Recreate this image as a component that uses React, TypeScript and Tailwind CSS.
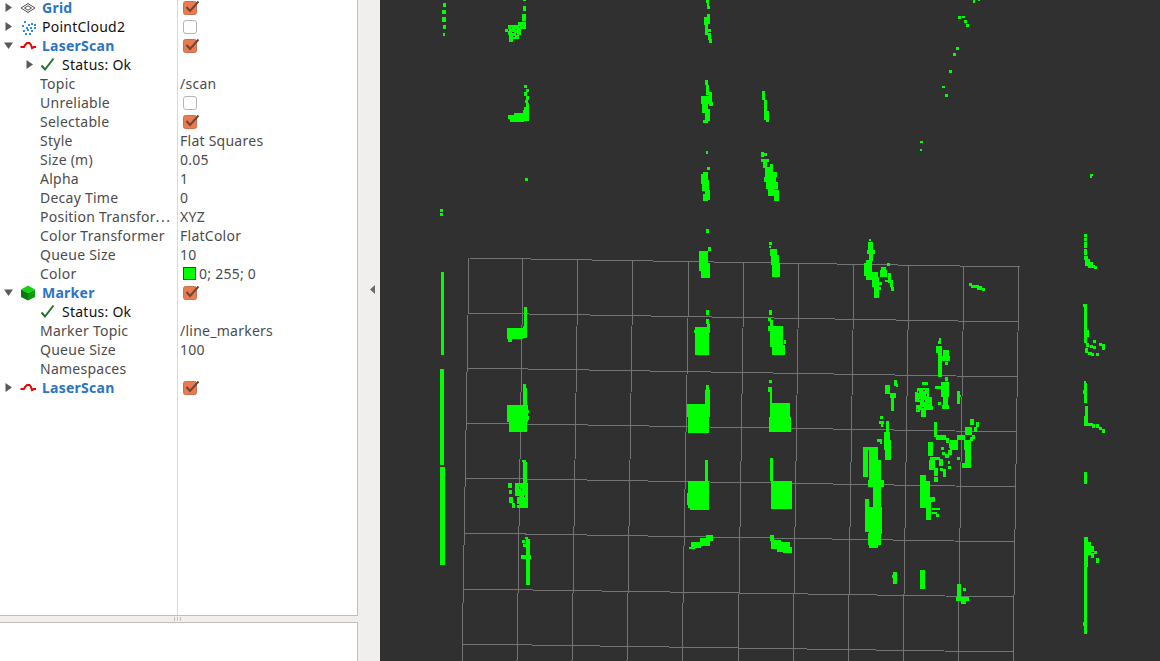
import React from "react";

const lines: number[][] = [
	[469, 258, 1020, 267],
	[467, 313, 1018, 322],
	[466, 368, 1017, 377],
	[465, 423, 1016, 432],
	[464, 478, 1016, 487],
	[464, 533, 1015, 542],
	[463, 589, 1014, 597],
	[462, 644, 1013, 652],
	[469, 258, 462, 661],
	[523, 259, 517, 661],
	[578, 260, 572, 661],
	[633, 260, 627, 661],
	[689, 261, 682, 661],
	[744, 262, 738, 661],
	[799, 263, 793, 661],
	[854, 264, 848, 661],
	[909, 265, 903, 661],
	[964, 266, 958, 661],
	[1019, 267, 1013, 661],
];

const pts: number[][] = [
	[441, 272, 3, 69], [441, 341, 3, 14], [440, 369, 4, 96], [440, 467, 5, 98],
	[443, 3, 3, 4], [442, 10, 4, 4], [442, 17, 4, 5], [443, 25, 3, 4], [443, 33, 2, 3], [440, 209, 3, 3], [440, 213, 3, 3],
	[523, 0, 3, 1], [523, 6, 3, 5], [522, 14, 4, 7], [518, 22, 8, 7], [508, 25, 13, 10], [505, 29, 4, 3], [509, 35, 10, 4], [509, 39, 4, 3],
	[524, 85, 3, 3], [526, 89, 3, 3], [524, 92, 3, 4], [526, 96, 3, 4], [525, 100, 3, 3], [526, 103, 3, 4], [524, 107, 5, 3], [523, 110, 6, 11], [514, 113, 10, 9], [508, 115, 8, 4], [510, 119, 10, 3],
	[706, 0, 3, 3], [707, 3, 2, 6], [707, 6, 3, 3], [707, 14, 3, 10], [704, 17, 4, 8], [705, 25, 3, 10], [708, 29, 3, 3], [708, 33, 3, 7], [709, 39, 3, 4],
	[705, 80, 3, 5], [706, 85, 3, 10], [709, 92, 3, 14], [701, 96, 8, 8], [702, 104, 6, 9], [705, 109, 5, 12], [703, 120, 5, 3], [710, 102, 3, 4],
	[762, 91, 3, 9], [764, 100, 3, 20], [766, 111, 3, 11],
	[706, 151, 2, 3], [707, 167, 3, 3], [703, 172, 5, 10], [701, 174, 4, 10], [702, 180, 7, 11], [705, 190, 5, 10], [703, 194, 5, 7], [706, 229, 3, 4],
	[761, 152, 3, 5], [764, 153, 3, 3], [761, 159, 8, 3], [763, 162, 4, 6], [770, 164, 3, 8], [765, 167, 7, 10], [772, 172, 5, 5], [764, 177, 12, 5], [766, 182, 12, 7], [768, 189, 6, 7], [774, 190, 5, 11],
	[525, 178, 3, 3],
	[706, 230, 3, 3], [708, 247, 3, 4], [699, 251, 9, 20], [701, 263, 9, 15],
	[769, 242, 3, 3], [769, 246, 2, 2], [770, 249, 7, 7], [771, 255, 8, 10], [772, 263, 8, 14],
	[524, 307, 3, 20], [523, 326, 4, 12], [507, 328, 16, 11], [508, 339, 4, 3],
	[706, 310, 3, 5], [706, 319, 3, 5], [695, 327, 14, 28], [694, 330, 16, 3], [707, 324, 3, 7],
	[769, 310, 3, 5], [768, 318, 3, 3], [770, 320, 3, 7], [768, 326, 15, 5], [770, 330, 13, 17], [772, 345, 13, 10], [784, 340, 2, 4],
	[523, 384, 3, 21], [525, 388, 2, 17], [507, 405, 21, 17], [509, 420, 18, 12], [528, 410, 1, 3], [528, 416, 1, 4],
	[706, 385, 3, 20], [705, 390, 5, 23], [687, 404, 23, 13], [688, 417, 21, 16],
	[769, 380, 3, 3], [768, 387, 4, 5], [770, 392, 2, 13], [770, 403, 20, 17], [769, 417, 22, 15],
	[522, 460, 4, 2], [523, 462, 4, 23], [520, 483, 8, 25], [515, 483, 5, 13], [508, 483, 4, 5], [509, 490, 3, 4], [509, 497, 4, 6], [512, 503, 3, 5], [517, 497, 3, 7], [517, 505, 7, 3],
	[525, 537, 3, 2], [526, 539, 4, 46], [523, 544, 3, 3], [522, 540, 3, 3], [521, 555, 10, 4],
	[705, 460, 3, 22], [688, 481, 21, 27], [687, 493, 2, 12], [690, 507, 19, 3],
	[770, 458, 3, 23], [771, 481, 21, 28],
	[706, 535, 7, 6], [700, 538, 10, 8], [691, 542, 10, 6], [689, 547, 6, 2],
	[770, 535, 4, 6], [771, 540, 10, 9], [777, 542, 13, 10], [783, 547, 9, 6],
	[869, 239, 2, 2], [868, 242, 5, 10], [867, 250, 8, 4], [869, 254, 4, 7], [866, 260, 6, 20], [864, 263, 8, 13], [868, 272, 10, 7], [872, 277, 7, 10], [874, 287, 7, 3], [874, 288, 5, 10], [880, 270, 7, 7], [881, 267, 5, 3], [887, 263, 3, 3], [885, 280, 3, 2], [879, 282, 3, 3], [888, 273, 3, 10], [890, 280, 3, 7], [891, 287, 3, 4],
	[969, 283, 3, 3], [971, 285, 8, 3], [977, 286, 5, 4], [982, 288, 3, 3],
	[1084, 234, 3, 3], [1084, 238, 3, 3], [1084, 242, 3, 6], [1084, 249, 3, 6], [1084, 256, 4, 4], [1085, 259, 5, 7], [1088, 262, 5, 6], [1092, 265, 3, 3], [1094, 266, 3, 3],
	[1083, 304, 4, 3], [1084, 307, 3, 3], [1084, 310, 3, 33], [1086, 330, 3, 7], [1086, 343, 3, 4], [1085, 348, 3, 5], [1088, 352, 4, 3], [1091, 353, 3, 3], [1096, 353, 3, 3], [1090, 345, 3, 3], [1093, 340, 3, 3], [1093, 346, 3, 3], [1099, 343, 3, 3], [1102, 344, 3, 6],
	[1084, 381, 2, 3], [1084, 383, 3, 20], [1083, 390, 4, 4], [1085, 406, 3, 17], [1084, 416, 4, 10], [1088, 423, 5, 3], [1092, 424, 3, 4], [1096, 424, 3, 4], [1099, 427, 3, 3], [1102, 429, 3, 4],
	[939, 338, 2, 3], [938, 341, 3, 3], [936, 346, 6, 7], [938, 353, 4, 24], [943, 350, 6, 10], [942, 356, 8, 5], [945, 362, 3, 3],
	[894, 380, 3, 6], [896, 384, 2, 3], [885, 385, 5, 9], [890, 393, 6, 5], [891, 397, 3, 14],
	[922, 382, 6, 3], [917, 388, 12, 13], [915, 392, 5, 10], [920, 397, 12, 13], [916, 405, 4, 7], [921, 410, 5, 7], [929, 406, 4, 4],
	[945, 377, 3, 4], [941, 382, 8, 15], [935, 386, 7, 3], [943, 395, 5, 10], [942, 405, 7, 4], [938, 402, 3, 3], [957, 391, 3, 13], [959, 395, 2, 2],
	[934, 422, 3, 15], [936, 435, 10, 5], [946, 438, 3, 5],
	[970, 419, 4, 6], [965, 427, 7, 8], [957, 435, 8, 5], [950, 440, 8, 10], [976, 422, 3, 5], [974, 427, 3, 5], [972, 435, 3, 4], [970, 437, 3, 4], [964, 440, 7, 10],
	[880, 416, 3, 3], [879, 421, 5, 3], [881, 424, 2, 3], [886, 421, 3, 29], [884, 432, 6, 18], [877, 439, 5, 3], [880, 441, 2, 3], [863, 447, 13, 3], [928, 442, 5, 8], [941, 447, 3, 3],
	[885, 440, 6, 20],
	[863, 457, 5, 20], [863, 447, 5, 12], [872, 447, 6, 14], [869, 447, 3, 13], [869, 460, 12, 22], [868, 480, 16, 7], [873, 487, 8, 23], [865, 499, 4, 33], [869, 507, 13, 27], [868, 533, 13, 12], [869, 545, 9, 3],
	[920, 475, 6, 33], [926, 481, 4, 20], [930, 497, 5, 5], [926, 500, 5, 20], [932, 508, 8, 2], [932, 512, 5, 2], [936, 514, 3, 3],
	[928, 443, 5, 13], [930, 457, 10, 3], [929, 460, 6, 10], [934, 468, 4, 8], [934, 477, 4, 5], [942, 452, 3, 3], [945, 454, 4, 4], [939, 459, 4, 7], [948, 461, 2, 3], [948, 466, 3, 3], [940, 468, 3, 3], [943, 469, 3, 8], [949, 443, 5, 5], [948, 450, 4, 5], [965, 440, 6, 28], [957, 457, 3, 3], [962, 463, 7, 5],
	[1084, 472, 3, 12],
	[892, 575, 2, 3], [893, 572, 4, 12], [920, 570, 5, 19],
	[957, 584, 4, 16], [956, 597, 13, 4], [961, 600, 5, 4], [963, 588, 3, 3],
	[1084, 537, 4, 30], [1084, 567, 3, 13], [1084, 577, 3, 54], [1083, 622, 4, 4], [1084, 630, 3, 4], [1088, 542, 3, 13], [1091, 546, 3, 6], [1094, 551, 3, 3], [1091, 553, 3, 5], [1096, 558, 3, 5],
	[973, 0, 2, 3], [978, 0, 2, 1], [958, 16, 3, 3], [962, 16, 3, 2], [964, 20, 3, 3], [966, 24, 3, 3], [956, 47, 3, 3], [953, 53, 3, 3], [949, 70, 3, 3], [942, 86, 3, 2], [945, 94, 3, 3], [920, 141, 3, 2], [920, 149, 2, 2], [1090, 174, 3, 2], [1090, 175, 2, 3],
];

// gaps in the dotted blobs, painted over the green
const holes: number[][] = [
	[511, 27, 1, 2], [515, 29, 2, 1], [519, 26, 1, 2], [512, 32, 2, 1], [516, 33, 1, 2], [508, 29, 1, 2], [522, 25, 1, 1], [513, 36, 2, 1],
	[918, 391, 1, 2], [923, 390, 2, 1], [926, 394, 1, 2], [919, 399, 2, 1], [924, 400, 1, 2], [928, 403, 1, 1], [922, 407, 2, 1], [917, 409, 1, 1],
	[521, 488, 1, 3], [524, 495, 1, 2], [519, 486, 1, 3],
];

const Arrow = ({ open }: { open?: boolean }) => (
	<svg width="9" height="9" viewBox="0 0 9 9" className="shrink-0">
		{open ? <path d="M0 1.500h9L4.500 8z" fill="#5a5a55" /> : <path d="M1.500 0v9L8 4.500z" fill="#5a5a55" />}
	</svg>
);

const GridIcon = () => (
	<svg width="16" height="16" viewBox="0 0 16 16" className="shrink-0">
		<path d="M1 8l7-4.500L15 8l-7 4.500zM4.500 8L8 5.800 11.500 8 8 10.200z" fill="none" stroke="#4a4a4a" strokeWidth="1" />
	</svg>
);

const CloudIcon = () => (
	<svg width="16" height="16" viewBox="0 0 16 16" className="shrink-0">
		{[[4, 2], [8, 5], [11, 4], [14, 5], [2, 6], [6, 8], [10, 8], [14, 8], [3, 11], [7, 10], [11, 11], [5, 14], [9, 14]].map(([x, y]) => (
			<rect key={`${x}-${y}`} x={x} y={y} width="2" height="2" fill="#2a8fe8" />
		))}
	</svg>
);

const ScanIcon = () => (
	<svg width="16" height="16" viewBox="0 0 16 16" className="shrink-0">
		<path d="M0.500 9h3.500l1-2 2-2h2.500l1.500 2 1 3 2-1h2" fill="none" stroke="#f00000" strokeWidth="2" />
	</svg>
);

const CubeIcon = () => (
	<svg width="16" height="16" viewBox="0 0 16 16" className="shrink-0">
		<path d="M8 8l7-3.500v7.500L8 15.500z" fill="#0a9a0a" />
		<path d="M8 .500l7 4L8 8 1 4.500z" fill="#10d410" />
		<path d="M8 8v7.500L1 12V4.500z" fill="#0a7a0a" />
	</svg>
);

const Check = () => (
	<svg width="15" height="15" viewBox="0 0 15 15" className="shrink-0">
		<path d="M1.500 8.500l3.500 4L13.500 1.500" fill="none" stroke="#25702a" strokeWidth="2" />
	</svg>
);

const Box = ({ on }: { on?: boolean }) =>
	on ? (
		<svg width="17" height="14" viewBox="0 0 17 14" className="ml-[3px] shrink-0 overflow-visible">
			<rect x=".5" y=".5" width="13" height="13" rx="2" fill="#ec7a4e" stroke="#c9714c" />
			<path d="M3.500 6l3.500 4L15.500 .5" fill="none" stroke="#66483a" strokeWidth="2" />
		</svg>
	) : (
		<span className="ml-[3px] block h-[14px] w-[14px] rounded-[3px] border border-[#b8b5b0] bg-white" />
	);

type Row = {
	indent: number;
	arrow?: "open" | "closed";
	icon?: React.ReactNode;
	label: React.ReactNode;
	head?: boolean;
	dark?: boolean;
	value?: React.ReactNode;
};

const rows: Row[] = [
	{ indent: 0, arrow: "closed", icon: <GridIcon />, label: "Grid", head: true, value: <Box on /> },
	{ indent: 0, arrow: "closed", icon: <CloudIcon />, label: "PointCloud2", dark: true, value: <Box /> },
	{ indent: 0, arrow: "open", icon: <ScanIcon />, label: "LaserScan", head: true, value: <Box on /> },
	{ indent: 1, arrow: "closed", icon: <Check />, label: "Status: Ok", dark: true },
	{ indent: 2, label: "Topic", value: "/scan" },
	{ indent: 2, label: "Unreliable", value: <Box /> },
	{ indent: 2, label: "Selectable", value: <Box on /> },
	{ indent: 2, label: "Style", value: "Flat Squares" },
	{ indent: 2, label: "Size (m)", value: "0.05" },
	{ indent: 2, label: "Alpha", value: "1" },
	{ indent: 2, label: "Decay Time", value: "0" },
	{ indent: 2, label: <>Position Transfor<span className="tracking-[1.5px]">...</span></>, value: "XYZ" },
	{ indent: 2, label: "Color Transformer", value: "FlatColor" },
	{ indent: 2, label: "Queue Size", value: "10" },
	{
		indent: 2,
		label: "Color",
		value: (
			<span className="flex items-center gap-[3px]">
				<span className="ml-[3px] block h-[13px] w-[13px] border border-[#404040] bg-[#00ff00]" />
				0; 255; 0
			</span>
		),
	},
	{ indent: 0, arrow: "open", icon: <CubeIcon />, label: "Marker", head: true, value: <Box on /> },
	{ indent: 1, icon: <Check />, label: "Status: Ok", dark: true },
	{ indent: 2, label: "Marker Topic", value: "/line_markers" },
	{ indent: 2, label: "Queue Size", value: "100" },
	{ indent: 2, label: "Namespaces" },
	{ indent: 0, arrow: "closed", icon: <ScanIcon />, label: "LaserScan", head: true, value: <Box on /> },
];

function TreeRow({ row }: { row: Row }) {
	const color = row.head ? "text-[#2b74c7] font-bold" : row.dark ? "text-[#111111]" : "text-[#4c4c4c]";
	return (
		<div className="flex h-[19px] items-center">
			<div className="flex w-[177px] shrink-0 items-center">
				{row.indent === 2 ? (
					<span className="w-[40px] shrink-0" />
				) : (
					<span className={`flex shrink-0 items-center ${row.indent === 1 ? "w-[40px] pl-[25px]" : "w-[20px] pl-[4px]"}`}>
						{row.arrow && <Arrow open={row.arrow === "open"} />}
					</span>
				)}
				{row.icon && <span className="w-[22px] shrink-0">{row.icon}</span>}
				<span className={`whitespace-nowrap ${color}`}>{row.label}</span>
			</div>
			<div className="ml-px flex flex-1 items-center whitespace-nowrap pl-[2px] text-[#4c4c4c]">{row.value}</div>
		</div>
	);
}

export default function App() {
	return (
		<div className="flex h-[661px] w-[1160px] overflow-hidden bg-[#f0efed] font-['Noto_Sans',sans-serif] text-[14px] leading-[15px] tracking-[0.25px]">
			<div className="flex w-[358px] shrink-0 flex-col">
				<div className="relative h-[616px] overflow-hidden border-b border-r border-[#c2bdb8] bg-white">
					<div className="absolute bottom-0 left-[177px] top-0 w-px bg-[#dcdad7]" />
					<div className="relative -mt-[2px]">
						{rows.map((row, i) => (
							<TreeRow key={i} row={row} />
						))}
					</div>
				</div>
				<div className="flex h-[6px] items-center justify-center pr-[3px]">
					<span className="flex gap-[2px]">
						<span className="block h-[4px] w-px bg-[#c4c1bc]" />
						<span className="block h-[4px] w-px bg-[#c4c1bc]" />
						<span className="block h-[4px] w-px bg-[#c4c1bc]" />
					</span>
				</div>
				<div className="flex-1 border-r border-t border-[#c2bdb8] bg-white" />
			</div>
			<div className="flex w-[22px] shrink-0 items-center justify-center pb-[82px] pl-[6px]">
				<svg width="7" height="9" viewBox="0 0 7 9">
					<path d="M6 0v9L1 4.500z" fill="#6a6a66" />
				</svg>
			</div>
			<svg width="780" height="661" viewBox="380 0 780 661" className="block shrink-0 bg-[#303030]" shapeRendering="crispEdges">
				{lines.map(([x1, y1, x2, y2], i) => (
					<line key={i} x1={x1} y1={y1} x2={x2} y2={y2} stroke="#747474" strokeWidth="1" />
				))}
				{pts.map(([x, y, w, h], i) => (
					<rect key={i} x={x} y={y} width={w} height={h} fill="#00ff00" />
				))}
				{holes.map(([x, y, w, h], i) => (
					<rect key={i} x={x} y={y} width={w} height={h} fill="#303030" />
				))}
			</svg>
		</div>
	);
}
